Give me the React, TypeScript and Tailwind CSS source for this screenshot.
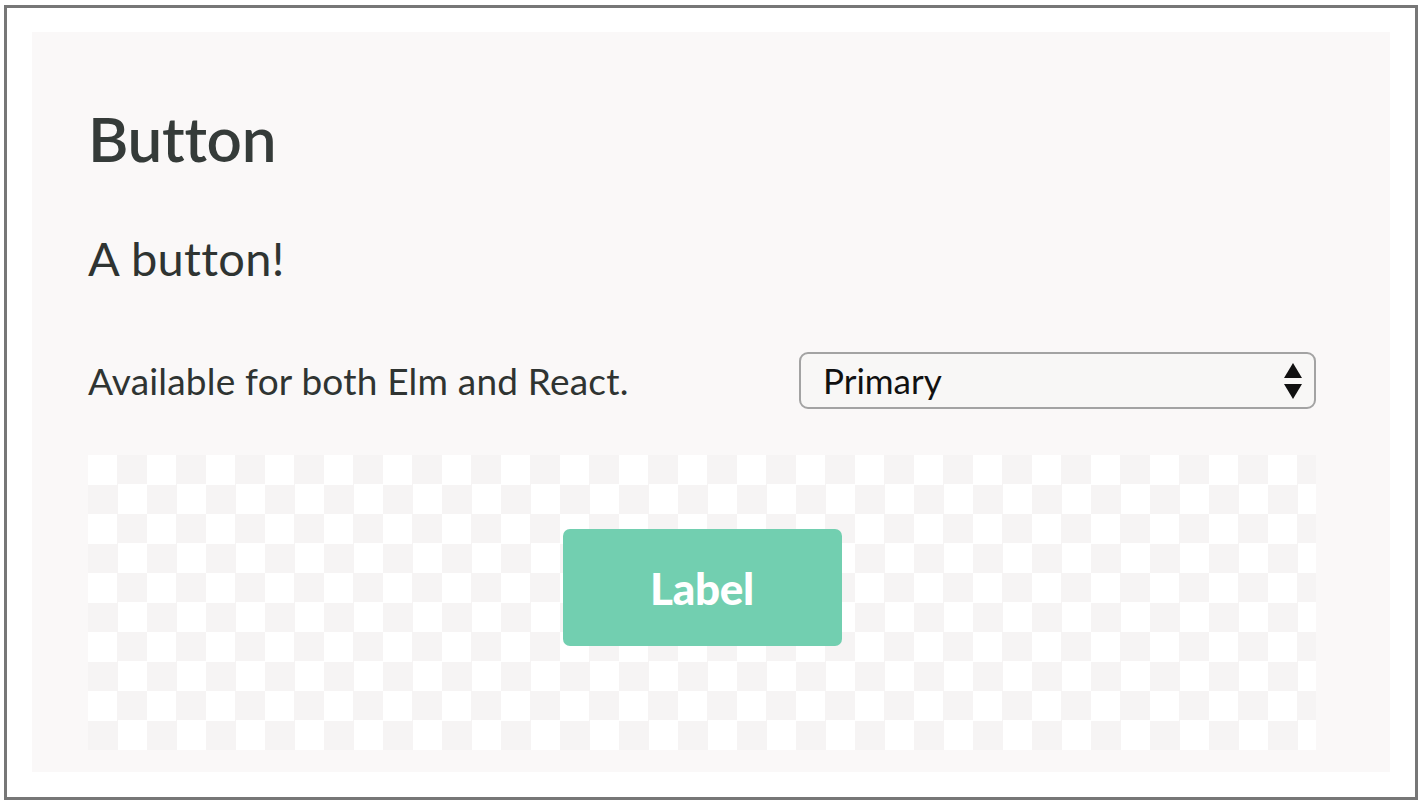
import React from "react";

export default function App() {
  return (
    <div className="w-[1425px] h-[807px] bg-white pt-[5px] pl-[4px]" style={{ fontFamily: "Lato, 'Open Sans', sans-serif" }}>
      <div className="w-[1414px] h-[795px] border-[3px] border-[#777777] pt-[24px] pl-[25px]">
        <div className="w-[1358px] h-[740px] bg-[#faf8f8] pl-[56px] pt-[75px]">
          <h1 className="text-[62px] leading-[62px] font-semibold text-[#353b39] tracking-[-0.3px]">Button</h1>
          <p className="mt-[66px] text-[47px] leading-[47px] font-normal text-[#2f3432] tracking-[0.3px]">A button!</p>
          <div className="mt-[70px] w-[1228px] flex items-center justify-between">
            <span className="text-[37px] leading-[37px] text-[#2f3432] font-normal tracking-[0.2px]">Available for both Elm and React.</span>
            <div className="w-[517px] h-[57px] rounded-[9px] border-2 border-[#a3a3a3] bg-[#f8f7f6] flex items-center justify-between pl-[22px] pr-[11px]">
              <span className="text-[35px] leading-[35px] text-[#111111]">Primary</span>
              <svg width="20" height="38" viewBox="0 0 20 38">
                <polygon points="10,1 19,16 1,16" fill="#111" />
                <polygon points="1,22 19,22 10,37" fill="#111" />
              </svg>
            </div>
          </div>
          <div
            className="mt-[46px] w-[1228px] h-[295px] flex justify-center pt-[74px] bg-white"
            style={{
              backgroundImage:
                "conic-gradient(#f6f4f4 0 25%, #ffffff 0 50%, #f6f4f4 0 75%, #ffffff 0)",
              backgroundSize: "59px 59px",
            }}
          >
            <div className="w-[279px] h-[117px] rounded-[7px] bg-[#72cfb0] flex items-center justify-center">
              <span className="text-white text-[44px] leading-[44px] font-black tracking-[-0.3px]">Label</span>
            </div>
          </div>
        </div>
      </div>
    </div>
  );
}
